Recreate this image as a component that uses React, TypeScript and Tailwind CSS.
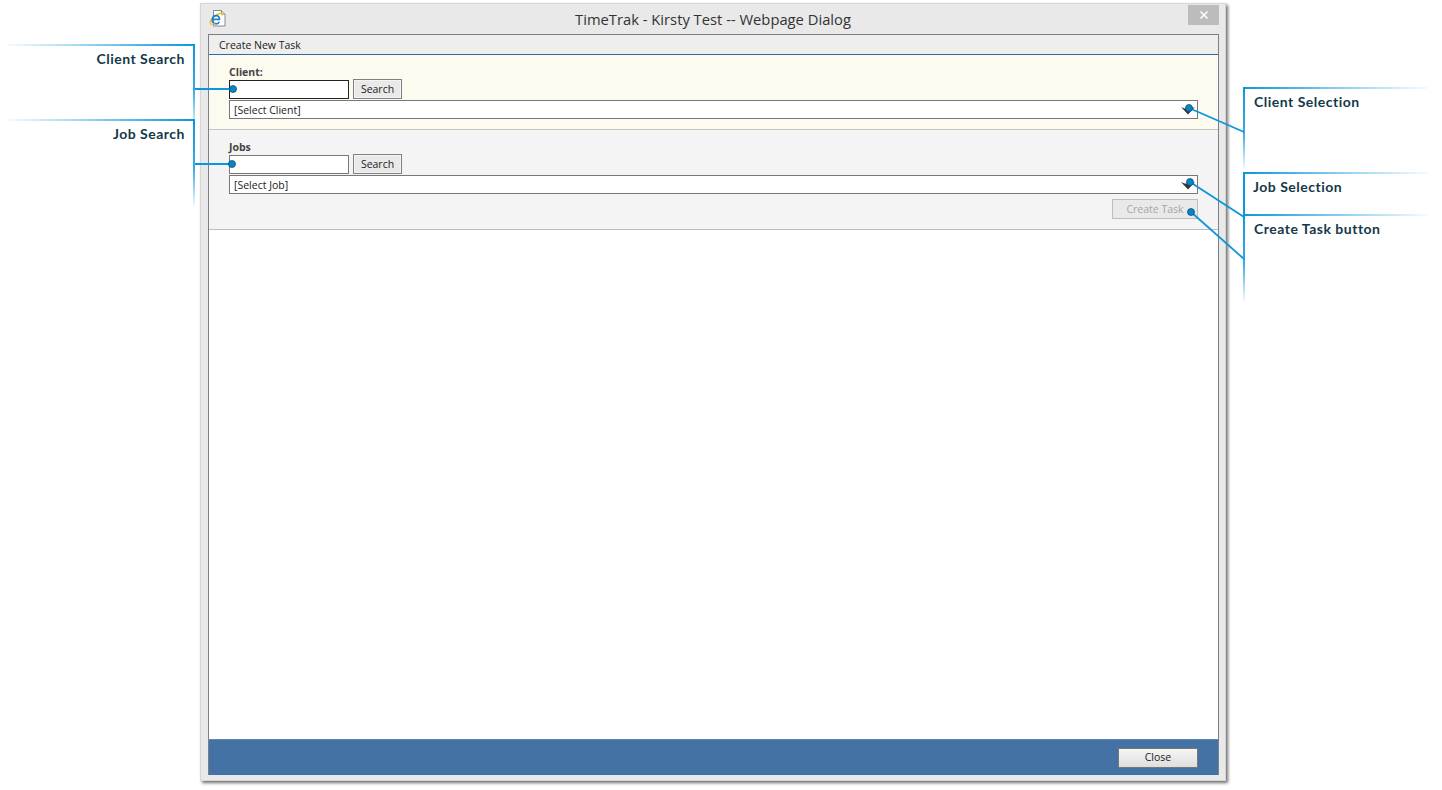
import React from 'react';

const uiFont = "font-['Open_Sans','Liberation_Sans',sans-serif]";

const IeIcon: React.FC = () => (
  <svg width="17" height="17" viewBox="0 0 17 17" className="ml-[8px] mt-[6px] shrink-0">
    <path d="M4.500.5H12.500l3.500 3.500v12H4.500z" fill="#fff" stroke="#8a8a8a" />
    <path d="M12.500.5v3.500H16" fill="#e8e8e8" stroke="#8a8a8a" />
    <path d="M1.500 13.500C-.5 11.500 6 5 10.500 3.500c2.300-.7 3 .4 2.200 2" fill="none" stroke="#f0c014" strokeWidth="1.400" />
    <path d="M3.200 9.300h7.300c.3-4.800-6.700-5-7.200.4-.4 4.600 5.700 5.300 7 2" fill="none" stroke="#1c7fd6" strokeWidth="1.700" />
    <path d="M1.500 13.500c.8 1.300 3 .8 4.500 0" fill="none" stroke="#f0c014" strokeWidth="1.200" />
  </svg>
);

const SearchRow: React.FC<{ focused?: boolean }> = ({ focused }) => (
  <div className="flex gap-1 items-center h-[20px]">
    <div className={`w-[120px] h-[19px] bg-white border ${focused ? 'border-[#222]' : 'border-[#777]'}`} />
    <button className="w-[49px] h-[20px] border border-[#808080] bg-[#e9e9e9] shadow-[inset_0_0_0_1px_#f4f4f4] text-[10.5px] leading-none text-[#222]">
      Search
    </button>
  </div>
);

const SelectBox: React.FC<{ label: string }> = ({ label }) => (
  <div className="h-[19px] border border-[#777] bg-white flex items-center justify-between pl-1 pr-[3px] pt-[2px] text-[10.5px] text-[#222]">
    <span>{label}</span>
    <svg width="14" height="9" viewBox="0 0 14 9" className="-mr-px">
      <path d="M0 1L7 8.500 14 1 10.500 2.500H3.500z" fill="#333" />
    </svg>
  </div>
);

// callout lines sit on top of the whole page
const Callouts: React.FC = () => (
  <svg width="1442" height="790" viewBox="0 0 1442 790" className="absolute inset-0 pointer-events-none">
    <defs>
      <linearGradient id="toRight" x1="0" y1="0" x2="1" y2="0">
        <stop offset="0" stopColor="#0b96dd" stopOpacity="0.04" />
        <stop offset="0.35" stopColor="#0b96dd" stopOpacity="0.35" />
        <stop offset="1" stopColor="#0b96dd" />
      </linearGradient>
      <linearGradient id="toLeft" x1="0" y1="0" x2="1" y2="0">
        <stop offset="0" stopColor="#0b96dd" />
        <stop offset="0.65" stopColor="#0b96dd" stopOpacity="0.35" />
        <stop offset="1" stopColor="#0b96dd" stopOpacity="0.04" />
      </linearGradient>
      <linearGradient id="down" x1="0" y1="0" x2="0" y2="1">
        <stop offset="0" stopColor="#0b96dd" />
        <stop offset="0.55" stopColor="#0b96dd" stopOpacity="0.8" />
        <stop offset="1" stopColor="#0b96dd" stopOpacity="0" />
      </linearGradient>
    </defs>

    <rect x="8" y="44" width="186" height="2" fill="url(#toRight)" />
    <rect x="193" y="44" width="2" height="86" fill="url(#down)" />
    <rect x="8" y="119" width="186" height="2" fill="url(#toRight)" />
    <rect x="193" y="119" width="2" height="90" fill="url(#down)" />

    <rect x="1243" y="87" width="185" height="2" fill="url(#toLeft)" />
    <rect x="1243" y="87" width="2" height="84" fill="url(#down)" />
    <rect x="1243" y="172" width="185" height="2" fill="url(#toLeft)" />
    <rect x="1243" y="172" width="2" height="44" fill="#0b96dd" />
    <rect x="1243" y="214" width="185" height="2" fill="url(#toLeft)" />
    <rect x="1243" y="214" width="2" height="90" fill="url(#down)" />

    <g stroke="#0b96dd" strokeWidth="1.800" fill="none">
      <path d="M195 89H233" />
      <path d="M195 164H232" />
      <path d="M1189 108L1244 132" />
      <path d="M1190 182L1244 217" />
      <path d="M1191 212L1244 259" />
    </g>
    <g fill="#0a84c8" stroke="#14506f" strokeWidth="0.800">
      <circle cx="233" cy="89" r="3.500" />
      <circle cx="232" cy="164" r="3.500" />
      <circle cx="1189" cy="108" r="3.500" />
      <circle cx="1190" cy="182" r="3.500" />
      <circle cx="1191" cy="212" r="3.500" />
    </g>
  </svg>
);

const CalloutLabel: React.FC<{ className: string; children: React.ReactNode }> = ({ className, children }) => (
  <div className={`absolute font-['Lato',sans-serif] font-bold text-[14px] leading-[18px] tracking-[0.5px] text-[#14384a] whitespace-nowrap ${className}`}>
    {children}
  </div>
);

export default function App() {
  return (
    <div className={`relative w-[1442px] h-[790px] overflow-hidden bg-white pt-[3px] pl-[200px] ${uiFont}`}>
      <div className="w-[1026px] h-[778px] flex flex-col bg-[#e9e9e9] border border-[#d6d6d6] shadow-[2px_2px_3px_#707070] pl-[7px] pr-[6px] pb-[5px]">
        {/* title bar */}
        <div className="relative h-[30px] shrink-0 -ml-[7px] -mr-[6px] flex">
          <IeIcon />
          <div className="flex-1 text-center text-[14.75px] leading-[30px] pr-[25px] text-[#333]">
            TimeTrak - Kirsty Test -- Webpage Dialog
          </div>
          <div className="absolute right-[6px] top-px w-[31px] h-[20px] bg-[#bcbcbc] flex items-center justify-center">
            <svg width="10" height="10" viewBox="0 0 10 10">
              <path d="M1.500 1.500l7 7M8.500 1.500l-7 7" stroke="#fff" strokeWidth="1.500" />
            </svg>
          </div>
        </div>

        {/* dialog body */}
        <div className="flex-1 flex flex-col border-t border-x border-[#7b7f88] bg-white">
          <div className="h-[20px] shrink-0 bg-[#eeeeee] border-b border-[#2d6aa8] pl-[10px] text-[10.5px] leading-[21px] text-[#1a1a1a]">
            Create New Task
          </div>

          <div className="h-[75px] shrink-0 bg-[#fdfbf0] border-b border-[#c4c4c0] px-[20px] pt-[10px]">
            <div className="h-[14px] text-[10.5px] leading-[15px] font-bold text-[#444]">Client:</div>
            <SearchRow focused />
            <div className="mt-px"><SelectBox label="[Select Client]" /></div>
          </div>

          <div className="h-[100px] shrink-0 bg-[#f4f4f4] border-b border-[#bdbdbd] px-[20px] pt-[10px]">
            <div className="h-[14px] text-[10.5px] leading-[15px] font-bold text-[#444]">Jobs</div>
            <SearchRow />
            <div className="mt-px"><SelectBox label="[Select Job]" /></div>
            <div className="flex justify-end mt-[5px]">
              <button className="w-[86px] h-[20px] border border-[#bdbdbd] bg-[#e9e9e9] text-[10.5px] leading-none text-[#a6a6a6]">
                Create Task
              </button>
            </div>
          </div>

          <div className="flex-1 bg-white" />

          <div className="h-[36px] shrink-0 bg-[#4472a4] border-t border-[#5f86b8] flex items-center justify-end pr-[20px]">
            <button className="w-[80px] h-[20px] border border-[#777] bg-gradient-to-b from-[#f6f6f6] to-[#dedede] text-[10.5px] leading-none text-[#222]">
              Close
            </button>
          </div>
        </div>
      </div>

      <Callouts />

      <CalloutLabel className="right-[1257px] top-[50px]">Client Search</CalloutLabel>
      <CalloutLabel className="right-[1257px] top-[125px]">Job Search</CalloutLabel>
      <CalloutLabel className="left-[1254px] top-[93px]">Client Selection</CalloutLabel>
      <CalloutLabel className="left-[1253px] top-[178px]">Job Selection</CalloutLabel>
      <CalloutLabel className="left-[1254px] top-[220px]">Create Task button</CalloutLabel>
    </div>
  );
}
